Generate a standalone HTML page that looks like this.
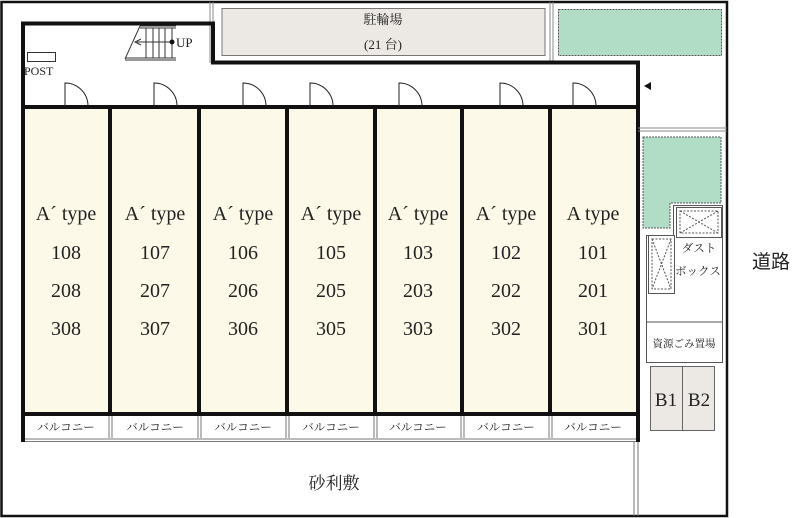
<!DOCTYPE html>
<html><head><meta charset="utf-8"><style>
html,body{margin:0;padding:0;background:#fff;}
svg{display:block;}
text{font-family:"Liberation Serif","Noto Serif CJK SC",serif;fill:#222;}
.jp{font-family:"Liberation Serif","Noto Serif CJK SC",serif;}
.js{font-family:"Liberation Sans","Noto Sans CJK JP",sans-serif;}
</style></head><body>
<svg width="800" height="518" viewBox="0 0 800 518" xmlns="http://www.w3.org/2000/svg">
<path d="M1.5 2 H727 V516 H1.5 Z" fill="none" stroke="#111" stroke-width="2.5"/>
<line x1="210" y1="2" x2="210" y2="63" stroke="#888" stroke-width="1"/>
<line x1="213" y1="2" x2="213" y2="63" stroke="#888" stroke-width="1"/>
<line x1="550" y1="2" x2="550" y2="62" stroke="#888" stroke-width="1"/>
<line x1="553" y1="2" x2="553" y2="62" stroke="#888" stroke-width="1"/>
<rect x="222" y="8.5" width="323" height="47" fill="#ece8e3" stroke="#777" stroke-width="1"/>
<text x="383" y="24" font-size="13" text-anchor="middle">駐輪場</text>
<text x="383" y="49" font-size="13" text-anchor="middle">(21 台)</text>
<rect x="558.5" y="9.5" width="163" height="46" fill="#b1dcc6" stroke="#555" stroke-width="1" stroke-dasharray="2 1"/>
<path d="M23 442 V23.5 H213 V62.5 H638 V442" fill="none" stroke="#111" stroke-width="4"/>
<line x1="21" y1="107" x2="640" y2="107" stroke="#111" stroke-width="4"/>
<rect x="25" y="109" width="611" height="304" fill="#fcf9e8"/>
<g stroke="#111" stroke-width="4">
<line x1="110" y1="107" x2="110" y2="415"/>
<line x1="199" y1="107" x2="199" y2="415"/>
<line x1="287" y1="107" x2="287" y2="415"/>
<line x1="375" y1="107" x2="375" y2="415"/>
<line x1="462" y1="107" x2="462" y2="415"/>
<line x1="550" y1="107" x2="550" y2="415"/>
<line x1="21" y1="414" x2="640" y2="414"/>
</g>
<g stroke="#777" stroke-width="1">
<line x1="25" y1="439" x2="636" y2="439"/>
<line x1="25" y1="441.5" x2="636" y2="441.5"/>
<line x1="109" y1="416" x2="109" y2="438"/><line x1="112" y1="416" x2="112" y2="438"/>
<line x1="198" y1="416" x2="198" y2="438"/><line x1="201" y1="416" x2="201" y2="438"/>
<line x1="286" y1="416" x2="286" y2="438"/><line x1="289" y1="416" x2="289" y2="438"/>
<line x1="374" y1="416" x2="374" y2="438"/><line x1="377" y1="416" x2="377" y2="438"/>
<line x1="461" y1="416" x2="461" y2="438"/><line x1="464" y1="416" x2="464" y2="438"/>
<line x1="549" y1="416" x2="549" y2="438"/><line x1="552" y1="416" x2="552" y2="438"/>
<line x1="634" y1="442" x2="634" y2="516"/><line x1="638" y1="442" x2="638" y2="516"/>
</g>
<g font-size="11.5" text-anchor="middle" fill="#444">
<text class="jp" x="66" y="431">バルコニー</text>
<text class="jp" x="155" y="431">バルコニー</text>
<text class="jp" x="243" y="431">バルコニー</text>
<text class="jp" x="331" y="431">バルコニー</text>
<text class="jp" x="418" y="431">バルコニー</text>
<text class="jp" x="506" y="431">バルコニー</text>
<text class="jp" x="593" y="431">バルコニー</text>
</g>
<g font-size="20" text-anchor="middle">
<text x="66" y="220">A´ type</text><text x="66" y="259">108</text><text x="66" y="297">208</text><text x="66" y="335">308</text>
<text x="155" y="220">A´ type</text><text x="155" y="259">107</text><text x="155" y="297">207</text><text x="155" y="335">307</text>
<text x="243" y="220">A´ type</text><text x="243" y="259">106</text><text x="243" y="297">206</text><text x="243" y="335">306</text>
<text x="331" y="220">A´ type</text><text x="331" y="259">105</text><text x="331" y="297">205</text><text x="331" y="335">305</text>
<text x="418" y="220">A´ type</text><text x="418" y="259">103</text><text x="418" y="297">203</text><text x="418" y="335">303</text>
<text x="506" y="220">A´ type</text><text x="506" y="259">102</text><text x="506" y="297">202</text><text x="506" y="335">302</text>
<text x="593" y="220">A type</text><text x="593" y="259">101</text><text x="593" y="297">201</text><text x="593" y="335">301</text>
</g>
<g fill="none" stroke="#222" stroke-width="1">
<path d="M65 107 V83 A23 23 0 0 1 88 106"/>
<path d="M154 107 V83 A23 23 0 0 1 177 106"/>
<path d="M243 107 V83 A23 23 0 0 1 266 106"/>
<path d="M310 107 V83 A23 23 0 0 1 333 106"/>
<path d="M399 107 V83 A23 23 0 0 1 422 106"/>
<path d="M500 107 V83 A23 23 0 0 1 523 106"/>
<path d="M573 107 V83 A23 23 0 0 1 596 106"/>
</g>
<g fill="none" stroke="#333" stroke-width="1">
<line x1="140" y1="26" x2="176" y2="26"/><line x1="140" y1="28" x2="176" y2="28"/>
<line x1="125" y1="58" x2="176" y2="58"/><line x1="125" y1="60" x2="176" y2="60"/>
<line x1="140" y1="26" x2="125" y2="59"/>
<line x1="146" y1="28" x2="146" y2="58"/><line x1="153" y1="28" x2="153" y2="58"/>
<line x1="159" y1="28" x2="159" y2="58"/><line x1="165" y1="28" x2="165" y2="58"/>
<line x1="172" y1="28" x2="172" y2="58"/>
<line x1="137" y1="42" x2="172" y2="42"/>
<path d="M141 39 L135 42 L141 45"/>
</g>
<circle cx="172" cy="42" r="2.5" fill="#111"/>
<text x="176" y="47" font-size="13">UP</text>
<rect x="27.5" y="52.5" width="28" height="9" fill="#fff" stroke="#333" stroke-width="1"/>
<text x="24" y="75" font-size="12">POST</text>
<path d="M644 86 L651 82 L651 90 Z" fill="#111"/>
<line x1="638" y1="128" x2="727" y2="128" stroke="#888" stroke-width="1"/>
<line x1="638" y1="131" x2="727" y2="131" stroke="#888" stroke-width="1"/>
<path d="M643 137 H721 V203 H670 V228 H643 Z" fill="#b1dcc6" stroke="#555" stroke-width="1" stroke-dasharray="2 1"/>
<path d="M646.5 235.5 H673.5 V205.5 H722.5 V362.5 H646.5 Z" fill="none" stroke="#555" stroke-width="1"/>
<rect x="676.5" y="207.5" width="45" height="30" fill="#fff" stroke="#555" stroke-width="1"/>
<rect x="648.5" y="235.5" width="26" height="58" fill="#fff" stroke="#555" stroke-width="1"/>
<g fill="none" stroke="#555" stroke-width="1" stroke-dasharray="2 1.5">
<rect x="680" y="211" width="38" height="22"/><path d="M680 211 L718 233 M718 211 L680 233"/>
<rect x="652" y="239" width="19" height="50"/><path d="M652 239 L671 289 M671 239 L652 289"/>
</g>
<line x1="646" y1="322" x2="722" y2="322" stroke="#555" stroke-width="1"/>
<g font-size="11.5" text-anchor="middle">
<text class="jp" x="699" y="252">ダスト</text>
<text class="jp" x="698" y="275">ボックス</text>
<text class="jp" x="684" y="347" font-size="10.5">資源ごみ置場</text>
</g>
<rect x="650.5" y="366.5" width="64" height="64" fill="#ece8e3" stroke="#666" stroke-width="1"/>
<line x1="682.5" y1="366" x2="682.5" y2="431" stroke="#666" stroke-width="1"/>
<text x="666" y="406" font-size="19" text-anchor="middle">B1</text>
<text x="699" y="406" font-size="19" text-anchor="middle">B2</text>
<text class="js" x="752" y="268" font-size="19">道路</text>
<text class="jp" x="334" y="489" font-size="17" text-anchor="middle">砂利敷</text>
</svg>
</body></html>
